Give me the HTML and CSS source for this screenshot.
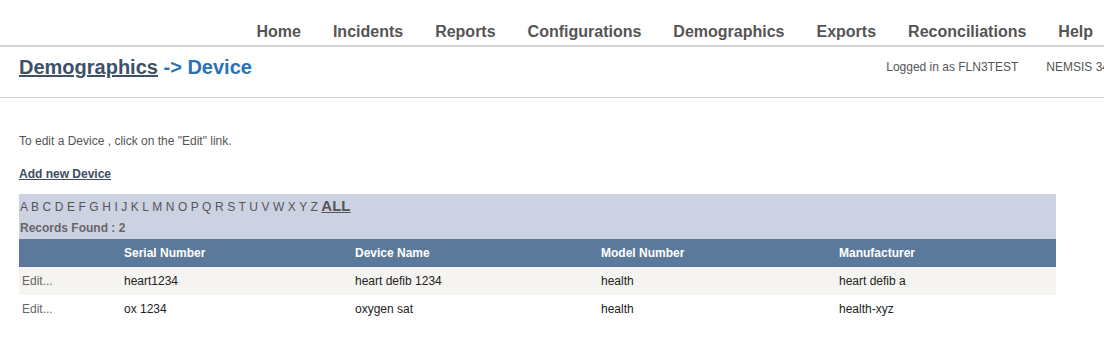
FILE: index.html
```html
<!DOCTYPE html>
<html lang="en">
<head>
  <meta charset="UTF-8">
  <title>Demographics - Device</title>
  <link rel="stylesheet" href="styles.css">
</head>
<body>
  <div class="topnav">
    <a href="#">Home</a>
    <a href="#">Incidents</a>
    <a href="#">Reports</a>
    <a href="#">Configurations</a>
    <a href="#">Demographics</a>
    <a href="#">Exports</a>
    <a href="#">Reconciliations</a>
    <a href="#">Help</a>
  </div>

  <div class="titlebar">
    <h1><a href="#" class="crumb">Demographics</a> <span class="current">-&gt; Device</span></h1>
    <div class="userinfo">
      <span>Logged in as FLN3TEST</span>
      <span class="version">NEMSIS 34.0</span>
    </div>
  </div>

  <div class="content">
    <p class="hint">To edit a Device , click on the "Edit" link.</p>
    <p class="addnew"><a href="#">Add new Device</a></p>

    <div class="filterbox">
      <div class="letters">
        <a href="#">A</a> <a href="#">B</a> <a href="#">C</a> <a href="#">D</a> <a href="#">E</a> <a href="#">F</a> <a href="#">G</a> <a href="#">H</a> <a href="#">I</a> <a href="#">J</a> <a href="#">K</a> <a href="#">L</a> <a href="#">M</a> <a href="#">N</a> <a href="#">O</a> <a href="#">P</a> <a href="#">Q</a> <a href="#">R</a> <a href="#">S</a> <a href="#">T</a> <a href="#">U</a> <a href="#">V</a> <a href="#">W</a> <a href="#">X</a> <a href="#">Y</a> <a href="#">Z</a> <a href="#" class="all">ALL</a>
      </div>
      <div class="records">Records Found : 2</div>
    </div>

    <table class="grid">
      <colgroup>
        <col class="c-edit">
        <col class="c-serial">
        <col class="c-name">
        <col class="c-model">
        <col>
      </colgroup>
      <thead>
        <tr>
          <th></th>
          <th>Serial Number</th>
          <th>Device Name</th>
          <th>Model Number</th>
          <th>Manufacturer</th>
        </tr>
      </thead>
      <tbody>
        <tr class="odd">
          <td><a href="#">Edit...</a></td>
          <td>heart1234</td>
          <td>heart defib 1234</td>
          <td>health</td>
          <td>heart defib a</td>
        </tr>
        <tr>
          <td><a href="#">Edit...</a></td>
          <td>ox 1234</td>
          <td>oxygen sat</td>
          <td>health</td>
          <td>health-xyz</td>
        </tr>
      </tbody>
    </table>
  </div>
</body>
</html>
```

FILE: styles.css
```css
body {
  margin: 0;
  font-family: 'Liberation Sans', Arial, sans-serif;
  color: #555;
  background: #fff;
  overflow: hidden;
}

a {
  color: inherit;
}

.topnav {
  display: flex;
  justify-content: flex-end;
  align-items: flex-end;
  gap: 32px;
  height: 45px;
  padding: 0 11px 0 0;
  border-bottom: 2px solid #d4d4d4;
}

.topnav a {
  font-size: 16px;
  font-weight: bold;
  color: #555;
  text-decoration: none;
  line-height: 20px;
  padding-bottom: 3px;
}

.titlebar {
  display: flex;
  justify-content: space-between;
  align-items: center;
  height: 50px;
  padding: 0 0 0 19px;
  border-bottom: 1px solid #cfcfcf;
}

.titlebar h1 {
  margin: -10px 0 0;
  font-size: 20px;
  line-height: 24px;
}

.crumb {
  color: #3c5267;
  text-decoration: underline;
}

.current {
  color: #2a72b3;
}

.userinfo {
  display: flex;
  gap: 28px;
  margin: -11px -15px 0 0;
  font-size: 12px;
  color: #555;
  white-space: nowrap;
}

.content {
  padding: 0 48px 0 19px;
}

.hint {
  margin: 36px 0 0;
  font-size: 12px;
  line-height: 14px;
}

.addnew {
  margin: 19px 0 0;
  font-size: 12px;
  line-height: 14px;
  font-weight: bold;
}

.addnew a {
  color: #3b4d5f;
}

.filterbox {
  margin-top: 13px;
  background: #cdd2e3;
  padding: 3px 0 0 1px;
  height: 45px;
  box-sizing: border-box;
}

.letters {
  font-size: 12px;
  line-height: 18px;
  color: #555;
  letter-spacing: 0.1px;
}

.letters a {
  text-decoration: none;
}

.letters a.all {
  font-size: 15px;
  font-weight: bold;
  letter-spacing: 0;
  text-decoration: underline;
}

.records {
  margin-top: 4px;
  font-size: 12px;
  font-weight: bold;
  color: #666;
  line-height: 16px;
}

.grid {
  width: 100%;
  border-collapse: collapse;
  font-size: 12px;
}

.c-edit { width: 102px; }
.c-serial { width: 231px; }
.c-name { width: 246px; }
.c-model { width: 238px; }

.grid th {
  background: #5b7a9b;
  color: #fff;
  text-align: left;
  height: 28px;
  padding: 0 3px;
}

.grid td {
  height: 28px;
  padding: 0 3px;
  color: #222;
}

.grid td a {
  color: #666;
  text-decoration: none;
}

.grid tr.odd td {
  background: #f5f4f0;
}
```
